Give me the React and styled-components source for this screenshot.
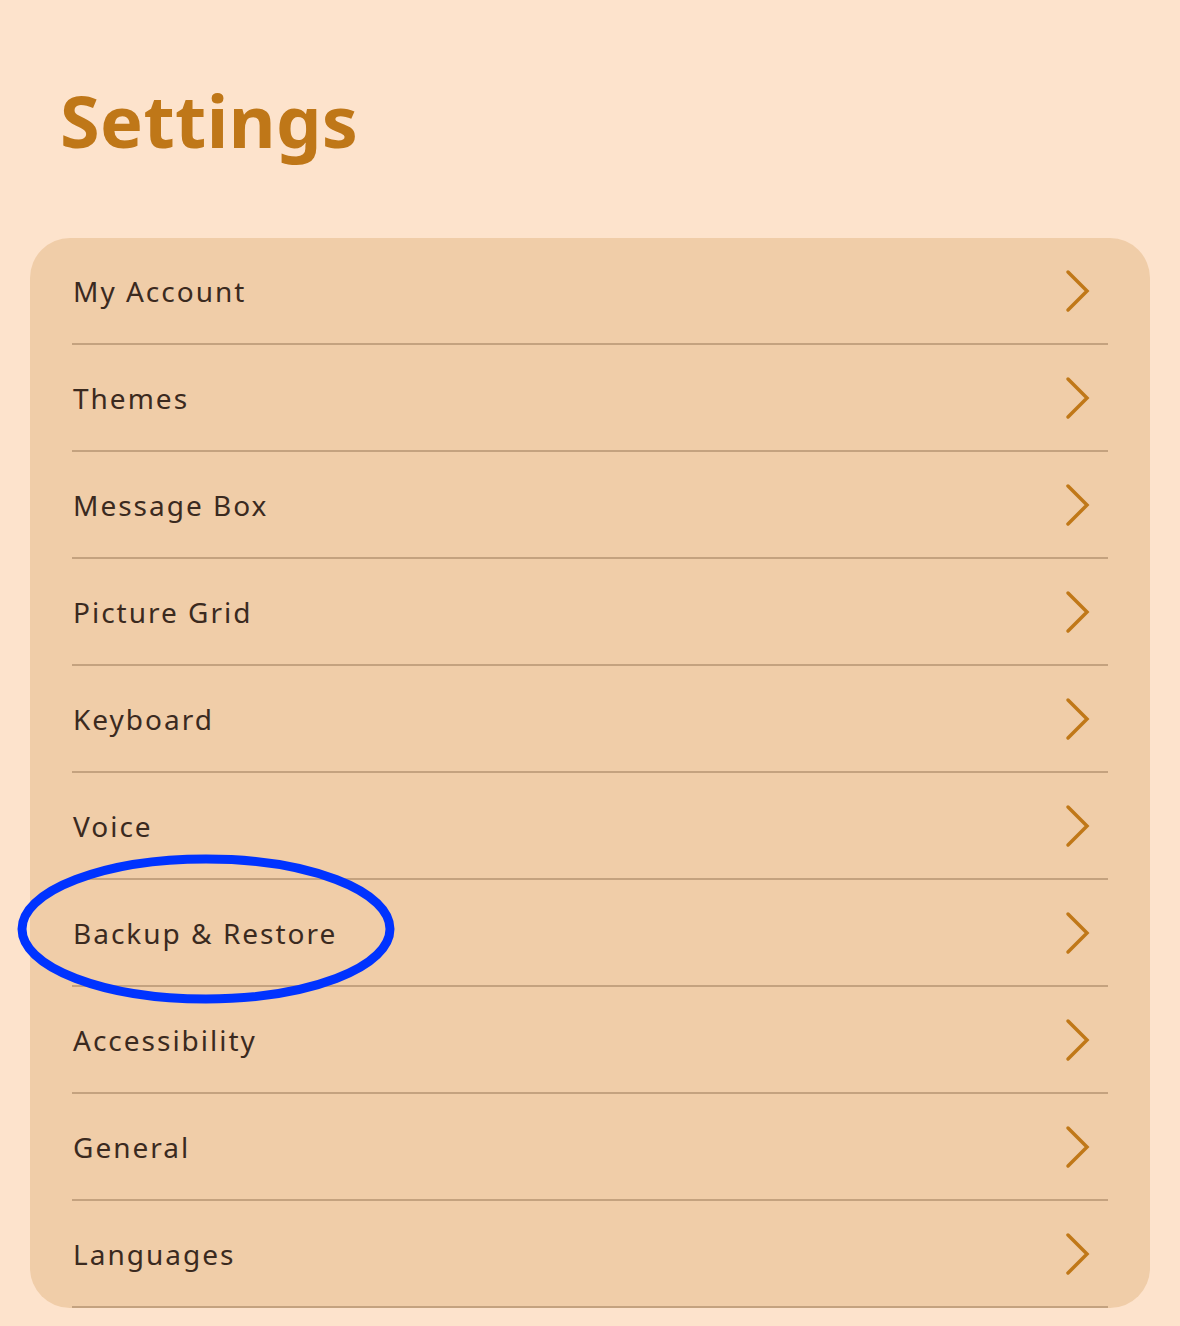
import React from 'react';
import styled, { createGlobalStyle } from 'styled-components';

const GlobalStyle = createGlobalStyle`
  html, body {
    margin: 0;
    padding: 0;
    background: #fde3cc;
  }
  body {
    font-family: "Noto Sans", "Open Sans", sans-serif;
  }
`;

const Page = styled.div`
  position: relative;
  min-height: 1326px;
  padding: 72px 30px 0;
  box-sizing: border-box;
`;

const Title = styled.h1`
  margin: 0 0 0 30px;
  font-size: 72px;
  line-height: 96px;
  font-weight: 700;
  letter-spacing: 0.4px;
  color: #bf7718;
`;

const Card = styled.ul`
  list-style: none;
  margin: 70px 0 0;
  padding: 0 42px;
  background: #f0cda8;
  border-radius: 40px;
`;

const Row = styled.li`
  display: flex;
  align-items: center;
  justify-content: space-between;
  height: 105px;
  border-bottom: 2px solid #c4a27f;
  padding: 0 16px 0 1px;
`;

const Label = styled.span`
  font-size: 28px;
  letter-spacing: 2px;
  color: #3b2a1f;
`;

const Chevron = () => (
  <svg width="28" height="44" viewBox="0 0 28 44" fill="none">
    <path
      d="M4 3 L23 22 L4 41"
      stroke="#c07818"
      strokeWidth="3.5"
      strokeLinecap="round"
      strokeLinejoin="miter"
    />
  </svg>
);

const Highlight = styled.svg`
  position: absolute;
  left: 14px;
  top: 850px;
  pointer-events: none;
`;

const items = [
  'My Account',
  'Themes',
  'Message Box',
  'Picture Grid',
  'Keyboard',
  'Voice',
  'Backup & Restore',
  'Accessibility',
  'General',
  'Languages',
];

const App = () => {
  return (
    <Page>
      <GlobalStyle />
      <Title>Settings</Title>
      <Card>
        {items.map(item => (
          <Row key={item}>
            <Label>{item}</Label>
            <Chevron />
          </Row>
        ))}
      </Card>
      <Highlight width="386" height="160" viewBox="0 0 386 160">
        <ellipse cx="192" cy="79" rx="184" ry="70" stroke="#0033ff" strokeWidth="9" fill="none" />
      </Highlight>
    </Page>
  );
};

export default App;
